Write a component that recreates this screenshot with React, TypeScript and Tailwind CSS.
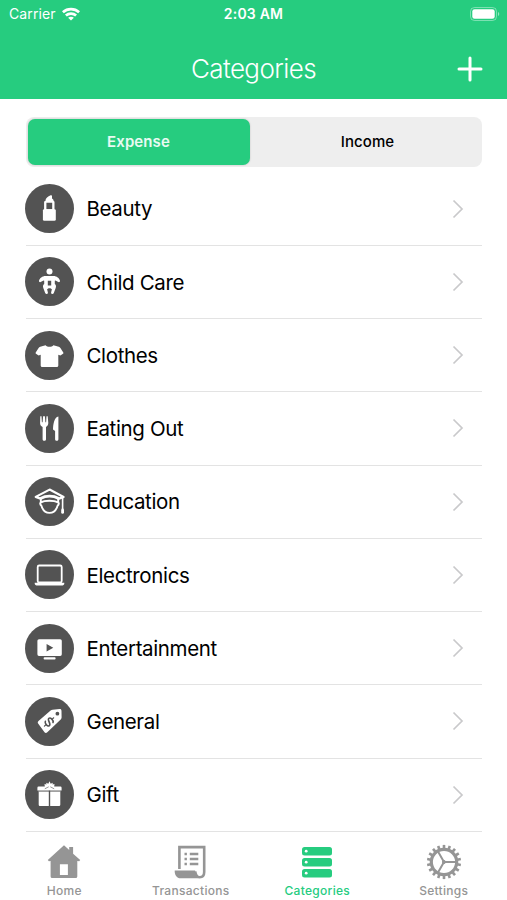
import type { ReactNode } from "react";
import { clsx } from "clsx";

interface Category {
  name: string;
  icon: ReactNode;
}

// Glyphs share the 49x49 box of the round badge they sit in.
const categories: Category[] = [
  {
    name: "Beauty",
    icon: (
      <>
        <path d="M20.4 17.8V17c0-2.600 2.600-4.600 5.200-5.700.9-.3 1.400.2 1.400 1v2.200c1 .5 1.600 1.200 1.600 2.300v1z" />
        <path fillRule="evenodd" d="M20.2 17h8.200q1.100 0 1.100 1.100v8.200H19.100v-8.200q0-1.100 1.100-1.100zM21.400 18.800v6.400h5.800v-6.400z" />
        <rect x="17.9" y="25.2" width="12.9" height="11.6" rx="1.4" />
      </>
    ),
  },
  {
    name: "Child Care",
    icon: (
      <>
        <circle cx="24.5" cy="14.6" r="3" />
        <path
          fillRule="evenodd"
          d="M20.5 19h8c3.200 0 5.800 2.200 6.500 4.700.2 1.300-1 1.900-2.100 1.100l-2.500-1.400-.6.4v3.200c1.300 1 1.500 2.400.9 4l-1.900 5c-.6 1.500-3 1-2.700-.6l.8-3.200-1.500-1h-1.800l-1.500 1 .8 3.200c.3 1.600-2.100 2.100-2.700.6l-1.900-5c-.6-1.600-.4-3 .9-4v-3.200l-.6-.4-2.500 1.400c-1.100.8-2.300.2-2.100-1.100.7-2.500 3.300-4.700 6.500-4.700zM22.800 23.800v4.600h3.400v-4.600z"
        />
      </>
    ),
  },
  {
    name: "Clothes",
    icon: (
      <path d="M20.6 14.200c1.600 2.100 6.200 2.100 7.800 0l5.400 1.500c.7.200 1.200.7 1.600 1.300l2.900 4.400c.3.5.2 1-.3 1.300l-2.600 1.900-2.100-.8v10.800c0 .9-.6 1.500-1.500 1.500H17.200c-.9 0-1.500-.6-1.500-1.500V23.800l-2.100.8-2.600-1.900c-.5-.3-.6-.8-.3-1.300l2.900-4.400c.4-.6.9-1.100 1.600-1.300z" />
    ),
  },
  {
    name: "Eating Out",
    icon: (
      <>
        <path d="M15.3 12.300h1.200l.4 6h.7l.5-6h1.800l.5 6h.7l.4-6h1.200l.6 6.800c0 2-1 3.200-2.300 3.800v12.300c0 2.200-3.400 2.200-3.400 0V22.900c-1.600-.6-2.600-1.800-2.500-3.800z" />
        <path d="M33.4 12.500v22.700c0 2.200-3.300 2.200-3.300 0V27L28 25.500c.1-5.400 1.300-12.500 5.400-13z" />
      </>
    ),
  },
  {
    name: "Education",
    icon: (
      <g fill="none" stroke="white" strokeLinejoin="round" strokeLinecap="round">
        <path strokeWidth="2.2" d="M15.5 21.600l-4.800-1.700 13.900-7.300 14 7.300-4.600 1.700" />
        <path strokeWidth="2.8" d="M16 21.300c4.800-3 12.400-3 17.200 0" />
        <path strokeWidth="1.9" d="M15.8 21.800v3.400c-1 .8-.7 2.800.5 3.300 1.200 4 4.300 7.400 8.200 7.400s7-3.400 8.200-7.400c1.200-.5 1.500-2.500.5-3.300v-3.400M16.600 25.200c2.600-1.800 12.500-2 15.700 0" />
        <path strokeWidth="1.6" d="M37.6 20.500V32" />
        <path strokeWidth="2.8" d="M37.6 33v2.400" />
      </g>
    ),
  },
  {
    name: "Electronics",
    icon: (
      <>
        <rect x="12.7" y="15.5" width="24" height="17" rx="1.5" fill="none" stroke="white" strokeWidth="1.8" />
        <path d="M9.7 32.800h29.600v.7c0 1-.8 1.900-1.900 1.900H11.600c-1.100 0-1.900-.9-1.900-1.900z" />
      </>
    ),
  },
  {
    name: "Entertainment",
    icon: (
      <>
        <path
          fillRule="evenodd"
          d="M14 15.200h21.200q1.600 0 1.600 1.600v13.500q0 1.600-1.600 1.600H14q-1.600 0-1.600-1.600V16.800q0-1.600 1.600-1.600zM21.600 20v7.600l6.700-3.800z"
        />
        <rect x="18.6" y="33.2" width="12" height="2.2" rx="1" />
      </>
    ),
  },
  {
    name: "General",
    icon: (
      <>
        <path
          fillRule="evenodd"
          d="M27.5 12.800l7-.7c1.200-.1 2 .6 2 1.800l.1 6.700c0 .9-.3 1.400-.9 2L22.300 35.300c-.9.9-2 .9-2.800 0l-6.200-8.600c-.8-1-.7-2 .2-2.800L25.600 13.500c.6-.5 1.200-.7 1.900-.7zM32.400 14.800a1.900 1.900 0 1 0 0 3.800 1.900 1.900 0 0 0 0-3.800z"
        />
        <g fill="none" stroke="#535353" strokeWidth="1.6" strokeLinecap="round" transform="rotate(48 24 25)">
          <path d="M27 22.300c-1-1.900-5.600-1.700-5.800.4-.2 2.500 6 1.800 5.800 4.500-.2 2.200-5 2.200-6 0" />
          <path strokeWidth="1.2" d="M24 18.700v2M24 29.200v2" />
        </g>
      </>
    ),
  },
  {
    name: "Gift",
    icon: (
      <>
        <path d="M23.6 16.800l-3.800-.2-.3-2.500 2 .3-.3-1.700 2.100 1.100 1.200-2.600 1.200 2.600 2.100-1.100-.3 1.700 2-.3-.3 2.500-3.800.2zM13.600 16.500h21.800q1.200 0 1.200 1.200v2.900H12.400v-2.900q0-1.200 1.200-1.200z" />
        <path d="M13.7 20.500h10.100v15.400h-8.900q-1.200 0-1.200-1.200zM25.200 20.500h10.100v14.200q0 1.200-1.200 1.200h-8.900z" />
        <path d="M13.7 21.200h21.600" stroke="#535353" strokeWidth=".8" />
        <path d="M19.8 18.800l3.900-2M29.200 18.800l-3.900-2" stroke="#535353" strokeWidth=".6" />
      </>
    ),
  },
];

const teeth = Array.from({ length: 18 }, (_, i) => i * 20);

const tabs = [
  {
    label: "Home",
    icon: (
      <path
        fillRule="evenodd"
        d="M17 1.200l5.200 4.900V3h3.900v6.700l7.100 6.300-1 1.300-1.900-.2v15.300q0 1.600-1.600 1.600H5.200q-1.600 0-1.600-1.600V17.100l-1.700.2L.8 16zM12.900 20.200v10.900h8V20.200z"
      />
    ),
  },
  {
    label: "Transactions",
    icon: (
      <>
        <path d="M5.4 25V3.100h24.800V28c0 3.600-2 5.200-4.500 5.200s-4-1.800-4.500-5.900" fill="none" stroke="currentColor" strokeWidth="2.6" />
        <path d="M.7 26.500h20.400c.4 4 1.200 6.500 3.600 7.800H6.600C2.800 34.300.5 31 .7 26.500z" />
        <path d="M10.5 10h2.400M15.800 10h8.500M10.500 15h2.400M15.800 15h8.500M10.500 20h2.400M15.800 20h8.500" fill="none" stroke="currentColor" strokeWidth="2.4" />
      </>
    ),
  },
  {
    label: "Categories",
    icon: (
      <>
        <rect x="2" y="3" width="30" height="8.5" rx="2.5" />
        <rect x="2" y="14" width="30" height="8.5" rx="2.5" />
        <rect x="2" y="25" width="30" height="8.5" rx="2.5" />
        <g fill="white">
          <circle cx="6.2" cy="7.2" r="1.4" />
          <circle cx="6.2" cy="18.2" r="1.4" />
          <circle cx="6.2" cy="29.2" r="1.4" />
        </g>
      </>
    ),
  },
  {
    label: "Settings",
    icon: (
      <g fill="none" stroke="currentColor">
        <circle cx="17" cy="18" r="12.7" strokeWidth="3.2" />
        {teeth.map((angle) => (
          <path key={angle} d="M17 4.500V.9" strokeWidth="2.6" transform={`rotate(${angle} 17 18)`} />
        ))}
        <path d="M17 18h12M17 18l-6-10.400M17 18l-6 10.400" strokeWidth="2" />
        <circle cx="17" cy="18" r="1.5" fill="currentColor" />
      </g>
    ),
  },
];

const StatusBar = () => (
  <div className="grid h-[27px] grid-cols-[1fr_auto_1fr] items-center px-[7px] text-[14px]">
    <div className="flex items-center gap-[6px] pl-[2px]">
      <span className="tracking-[0.1px]">Carrier</span>
      <svg className="h-[14px] w-[18px]" viewBox="0 0 18 14" fill="none" stroke="white" strokeWidth="2.7">
        <path d="M.9 5.200c4.600-4.200 11.600-4.200 16.200 0M3.900 8.500c2.900-2.600 7.300-2.600 10.200 0" />
        <path d="M9 13.600l-2.900-2.900c1.600-1.400 4.200-1.400 5.800 0z" fill="white" stroke="none" />
      </svg>
    </div>
    <span className="font-semibold tracking-[0.2px]">2:03 AM</span>
    <svg className="h-[14px] w-[30px] justify-self-end" viewBox="0 0 30 14">
      <rect x=".5" y=".5" width="26" height="13" rx="4" fill="none" stroke="white" strokeOpacity=".4" />
      <rect x="2.3" y="2.3" width="22.4" height="9.4" rx="2.3" fill="white" />
      <path d="M28 5v4c1.700-.6 1.700-3.400 0-4z" fill="white" fillOpacity=".5" />
    </svg>
  </div>
);

const Header = () => (
  <header className="h-[98.5px] shrink-0 bg-[#26cc7f] text-white">
    <StatusBar />
    <div className="grid h-[71px] grid-cols-[1fr_auto_1fr] items-center px-[24px] pt-[13px]">
      <h1 className="col-start-2 text-[26px] leading-none font-light tracking-[-0.6px]">Categories</h1>
      <svg className="h-[26px] w-[26px] justify-self-end" viewBox="0 0 26 26" stroke="white" strokeWidth="3" strokeLinecap="round">
        <path d="M13 2v22M2 13h22" />
      </svg>
    </div>
  </header>
);

const CategoryRow = ({ name, icon }: Category) => (
  <li className="flex h-[73.25px] items-center border-b border-[#e3e3e3] pr-[18px]">
    <svg className="-ml-px h-[49px] w-[49px] shrink-0" viewBox="0 0 49 49" fill="white">
      <circle cx="24.5" cy="24.5" r="24.5" fill="#535353" />
      {icon}
    </svg>
    <span className="ml-[13px] flex-1 pt-[2px] text-[20.5px] tracking-[-0.36px]">{name}</span>
    <svg className="h-[20px] w-[12px]" viewBox="0 0 12 20" fill="none" stroke="#c9c9cb" strokeWidth="1.7">
      <path d="M1.5 1.500L10 10l-8.500 8.500" />
    </svg>
  </li>
);

export default function App() {
  return (
    <div className="flex h-[900px] w-[507px] flex-col overflow-hidden bg-white font-['Inter',sans-serif] text-black">
      <Header />
      <main className="px-[25.5px] pt-[18.5px]">
        <div className="flex h-[50px] rounded-[8px] bg-[#eeeeee] p-[2px] text-[15px]">
          <button className="w-[222px] rounded-[7px] bg-[#26cc7f] font-semibold tracking-[0.1px] text-white/90 shadow-[0_0_2px_rgba(0,0,0,0.2)]">
            Expense
          </button>
          <button className="flex-1 pl-[6px] font-medium tracking-[0.1px]">Income</button>
        </div>
        <ul className="pt-[5.5px]">
          {categories.map((category) => (
            <CategoryRow key={category.name} {...category} />
          ))}
        </ul>
      </main>
      <nav className="grid flex-1 grid-cols-4 pt-[12px] pl-px">
        {tabs.map(({ label, icon }) => (
          <div
            key={label}
            className={clsx(
              "flex flex-col items-center",
              label === "Categories" ? "text-[#26cc7f]" : "text-[#959595]",
            )}
          >
            <svg className="h-[36px] w-[34px]" viewBox="0 0 34 36" fill="currentColor">
              {icon}
            </svg>
            <span className="mt-[3px] text-[12px] leading-[16px] font-medium tracking-[0.3px]">{label}</span>
          </div>
        ))}
      </nav>
    </div>
  );
}
